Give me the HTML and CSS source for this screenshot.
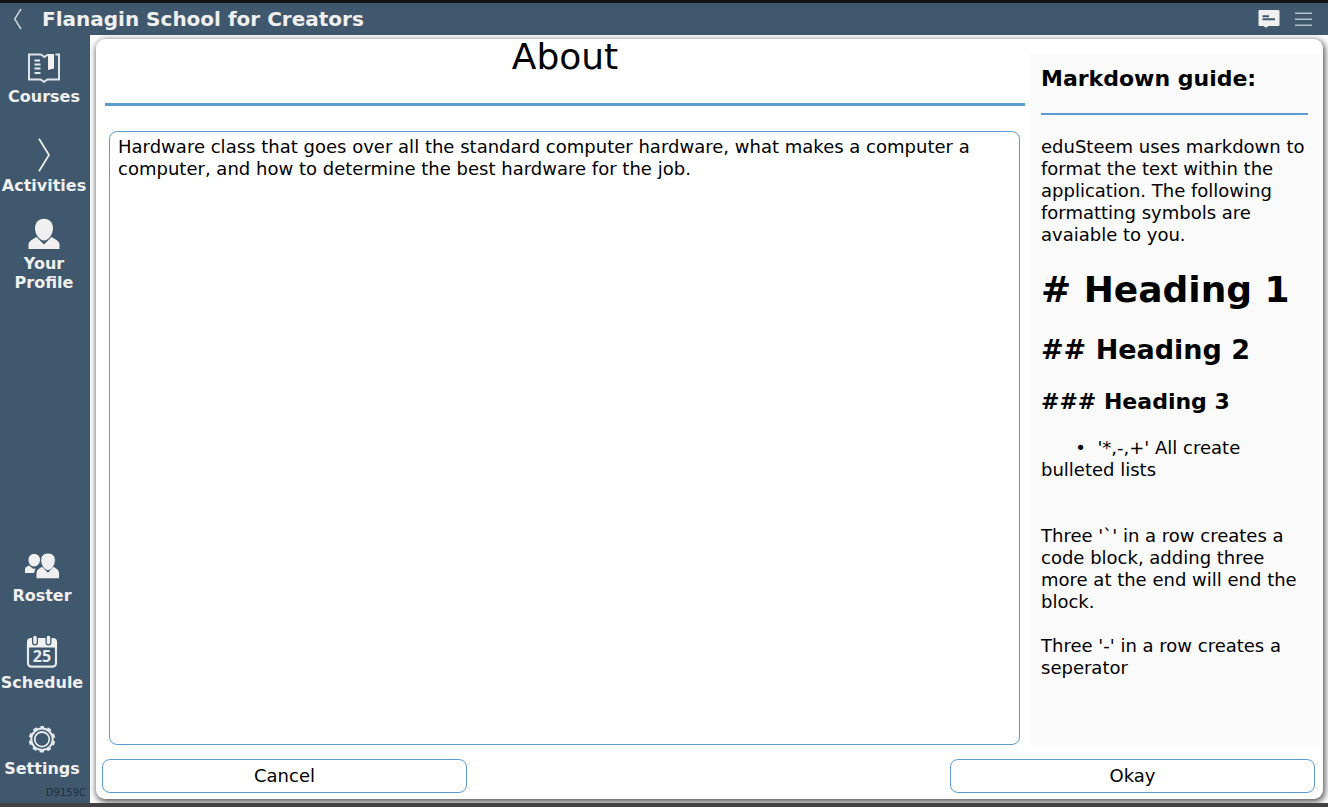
FILE: index.html
```html
<!DOCTYPE html>
<html lang="en">
<head>
<meta charset="utf-8">
<title>Flanagin School for Creators</title>
<link rel="stylesheet" href="styles.css">
</head>
<body>
<header class="topbar">
  <svg class="back" width="10" height="22" viewBox="0 0 10 22"><path d="M8 1 1.700 11 8 21" fill="none" stroke="#cbd3da" stroke-width="1.500"/></svg>
  <h1 class="title">Flanagin School for Creators</h1>
  <svg class="chat" width="22" height="18" viewBox="0 0 22 18"><path d="M1.500 0h19q1 0 1 1v14q0 1-1 1H10.500L8 17.800 5.500 16h-4q-1 0-1-1V1q0-1 1-1z" fill="#f0f0f0"/><path d="M4.500 6.200h6.500M4.500 9.300H17" stroke="#3f586e" stroke-width="1.900"/></svg>
  <svg class="menu" width="17" height="15" viewBox="0 0 17 15"><path d="M0 1.200h17M0 7.200h17M0 13.200h17" stroke="#b5c0ca" stroke-width="1.600"/></svg>
</header>
<div class="shell">
  <nav class="sidebar">
    <a class="item courses">
      <svg width="34" height="31" viewBox="0 0 34 31"><path d="M14 2.500H2V27.500H13.500L17 29.800 20.500 27.500H32V2.500H28.500M14 2.500 17.500 5 21 2.500" fill="none" stroke="#e0e4e8" stroke-width="2"/><path d="M20.800 2h6.200v14.500l-6 1.500V5z" fill="#f0f0f0"/><path d="M7.500 8.500H13M7.500 12.500H13.500M7.500 16.500H13.500M7.500 21H13.500" stroke="#e6eaed" stroke-width="2"/></svg>
      <span>Courses</span>
    </a>
    <a class="item activities">
      <svg width="14" height="34" viewBox="0 0 14 34"><path d="M2 .800 12 17 2 33.200" fill="none" stroke="#f0f0f0" stroke-width="1.700"/></svg>
      <span>Activities</span>
    </a>
    <a class="item profile">
      <svg width="32" height="32" viewBox="0 0 32 32"><path d="M16 .800c5.500 0 9 4 9 9.500S21 22.500 16 22.500 7 15.800 7 10.300 10.500.800 16 .800z" fill="#f0f0f0"/><path d="M.500 31v-5Q1 23.500 3.500 22L8.500 19 16 26.500 23.500 19 28.500 22Q31 23.500 31.500 26v5z" fill="#f0f0f0"/></svg>
      <span>Your<br>Profile</span>
    </a>
    <a class="item roster">
      <svg width="36" height="28" viewBox="0 0 36 28"><g fill="#f0f0f0"><path d="M10 2c4 0 6 2.600 6 6s-2.600 6.500-6 6.500S4.500 11.500 4.500 8s2-6 5.500-6z"/><path d="M1 21v-4q0-1.500 1.500-2.300L5 13.500l4.500 3.500 2-1L10 21z"/></g><path d="M24 1c4.600 0 7.300 3 7.300 7.300S28.300 18.500 24 18.500s-7.300-5.900-7.300-10.200S19.400 1 24 1z" fill="#f0f0f0" stroke="#3f586e"/><path d="M12.500 26.200v-5.200q0-3 2.500-4.300l3-2L24 20.800l5.500-6L32.500 16.700q2.500 1.300 2.500 4.300v5.200z" fill="#f0f0f0"/></svg>
      <span>Roster</span>
    </a>
    <a class="item schedule">
      <svg width="32" height="34" viewBox="0 0 32 34"><rect x="2" y="5" width="28" height="26.700" rx="3.500" fill="none" stroke="#e4e8ea" stroke-width="2.200"/><path d="M1 12.500V7q0-4 4-4h22q4 0 4 4v5.500z" fill="#f0f0f0"/><path d="M9 3v4.500M22.500 3v4.500" stroke="#3f586e" stroke-width="6" stroke-linecap="round"/><path d="M9 2.500v5M22.500 2.500v5" stroke="#f0f0f0" stroke-width="3.400" stroke-linecap="round"/><text x="16" y="27" class="date">25</text></svg>
      <span>Schedule</span>
    </a>
    <a class="item settings">
      <svg width="28" height="28" viewBox="0 0 28 28"><g fill="none" stroke="#e6eaed"><circle cx="14" cy="14.300" r="12.200" stroke-width="2.200" stroke-dasharray="4.200 3.466" stroke-dashoffset="2.100" transform="rotate(-90 14 14.300)"/><circle cx="14" cy="14.300" r="10.700" stroke-width="2"/><circle cx="14" cy="14.300" r="7.300" stroke-width="1.800"/></g></svg>
      <span>Settings</span>
    </a>
    <small class="build">D9159C</small>
  </nav>
  <main class="stage">
    <section class="card">
      <div class="content">
        <div class="editor">
          <h2 class="heading">About</h2>
          <div class="textbox">Hardware class that goes over all the standard computer hardware, what makes a computer a computer, and how to determine the best hardware for the job.</div>
        </div>
        <aside class="guide">
          <h3 class="guide-title">Markdown guide:</h3>
          <p class="intro">eduSteem uses markdown to format the text within the application. The following formatting symbols are avaiable to you.</p>
          <p class="h1"># Heading 1</p>
          <p class="h2">## Heading 2</p>
          <p class="h3">### Heading 3</p>
          <p class="bullets">&nbsp;&nbsp;&nbsp;&nbsp;&nbsp;&nbsp;•&nbsp;&nbsp;'*,-,+' All create bulleted lists</p>
          <p class="code">Three '`' in a row creates a code block, adding three more at the end will end the block.</p>
          <p class="rule">Three '-' in a row creates a seperator</p>
        </aside>
      </div>
      <div class="actions">
        <button class="btn">Cancel</button>
        <button class="btn">Okay</button>
      </div>
    </section>
  </main>
</div>
</body>
</html>
```
FILE: styles.css
```css
* { box-sizing: border-box; }
body {
  margin: 0;
  height: 807px;
  overflow: hidden;
  display: flex;
  flex-direction: column;
  border-top: 3px solid #111516;
  border-bottom: 4px solid #424242;
  background: #fff;
  color: #000;
  font: 18px/22px "DejaVu Sans", sans-serif;
}
h1, h2, h3, p { margin: 0; }
.topbar {
  height: 32px;
  flex: none;
  display: flex;
  align-items: center;
  padding: 0 16px 0 13px;
  background: #3f586e;
}
.title { margin-left: 19px; flex: 1; font-size: 20px; line-height: 24px; color: #f0f0f0; }
.chat { margin-top: 0; }
.menu { margin-left: 15px; }
.shell { flex: 1; min-height: 0; display: flex; }
.sidebar {
  width: 90px;
  flex: none;
  display: flex;
  flex-direction: column;
  background: #3f586e;
  color: #f0f0f0;
}
.item {
  width: 88px;
  display: flex;
  flex-direction: column;
  align-items: center;
  text-align: center;
  font-weight: bold;
  font-size: 16px;
  line-height: 19px;
}
.item svg { display: block; }
.courses { padding-top: 17px; }
.courses span { margin-top: 4px; }
.activities { padding-top: 32px; }
.activities span { margin-top: 4px; }
.profile { padding-top: 23px; }
.profile span { margin-top: 4px; }
.roster, .schedule, .settings { width: 84px; }
.roster { margin-top: auto; }
.roster span { margin-top: 6px; }
.schedule { padding-top: 30px; }
.schedule span { margin-top: 4px; }
.settings { padding-top: 33px; }
.settings span { margin-top: 6px; }
.date { font: bold 16px "Open Sans", sans-serif; text-anchor: middle; fill: #e8ebed; }
.build { align-self: flex-end; margin: 8px 4px 3px 0; font-size: 10px; line-height: 14px; color: #222f3b; }
.stage { flex: 1; min-width: 0; padding: 4px 5px 4px 6px; }
.card {
  height: 760px;
  display: flex;
  flex-direction: column;
  border-radius: 9px;
  background: #fff;
  box-shadow: 1px 2px 6px 1px #555;
}
.content { height: 706px; display: flex; }
.editor { width: 929px; padding-left: 9px; display: flex; flex-direction: column; }
.heading {
  height: 67px;
  border-bottom: 3px solid #5b9bd5;
  font-weight: normal;
  font-size: 36px;
  line-height: 36px;
  text-align: center;
}
.textbox {
  width: 911px;
  height: 614px;
  margin: 25px 0 0 4px;
  padding: 4px 8px;
  border: 1px solid #5b9bd5;
  border-radius: 8px;
  letter-spacing: .01px;
}
.guide { width: 290px; margin: 15px 0 0 5px; padding: 12px 11px 0 11px; background: #fafafa; }
.guide-title { width: 267px; height: 49px; border-bottom: 2px solid #5b9bd5; font-size: 22px; line-height: 26px; }
.intro { margin-top: 21px; }
.h1, .h2, .h3 { font-weight: bold; white-space: nowrap; }
.h1 { margin-top: 23px; font-size: 36px; line-height: 42px; }
.h2 { margin-top: 23px; font-size: 27px; line-height: 32px; }
.h3 { margin-top: 23px; font-size: 22px; line-height: 26px; }
.bullets { margin-top: 22px; }
.code { margin-top: 44px; }
.rule { margin-top: 22px; }
.actions { display: flex; justify-content: space-between; padding: 14px 8px 0 6px; }
.btn {
  width: 365px;
  height: 34px;
  padding: 0;
  border: 1px solid #5b9bd5;
  border-radius: 8px;
  background: #fff;
  color: #000;
  font: inherit;
}
```
